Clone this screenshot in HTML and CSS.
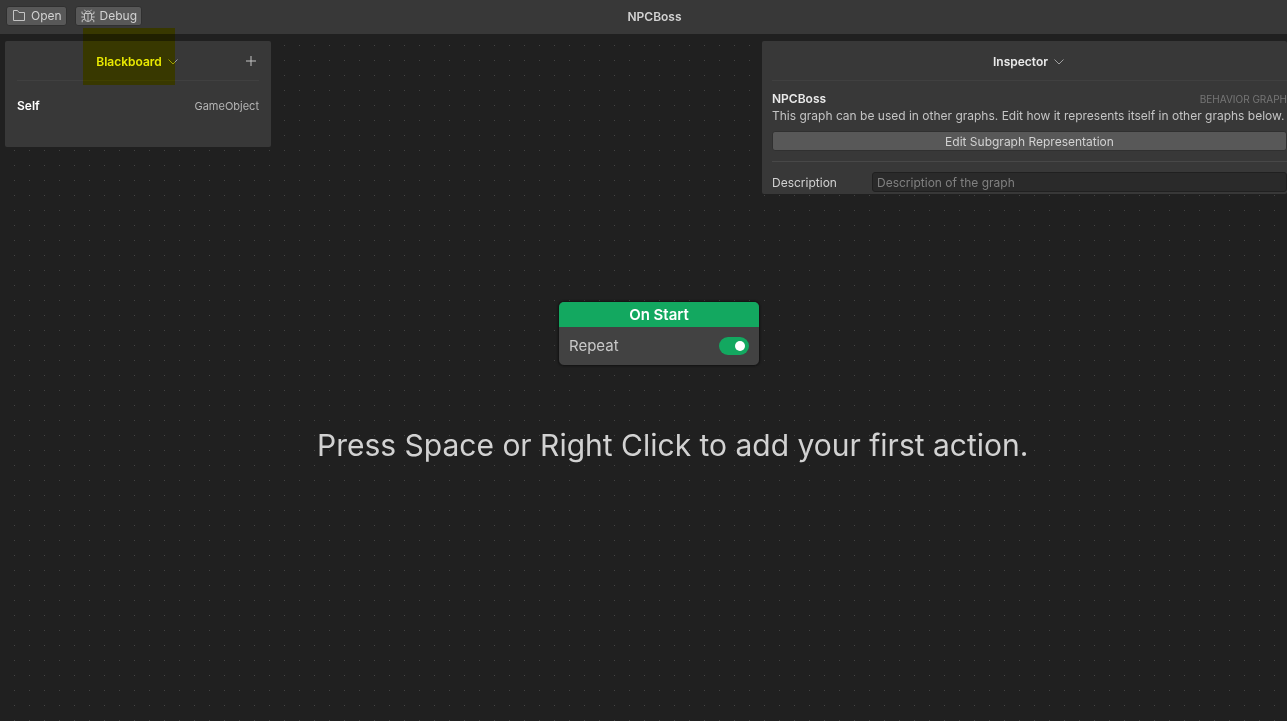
FILE: index.html
```html
<!DOCTYPE html>
<html lang="en">
<head>
<meta charset="utf-8">
<meta name="viewport" content="width=device-width, initial-scale=1">
<title>NPCBoss</title>
<link rel="stylesheet" href="styles.css">
</head>
<body>
<header class="toolbar">
  <div class="toolbar-actions">
    <button class="button tool" type="button">
      <svg class="icon" width="14" height="14" viewBox="0 0 14 14" aria-hidden="true"><path d="M1.500 11.500v-10h4l1.500 2h5.500v8z"/></svg>
      Open
    </button>
    <button class="button tool" type="button">
      <svg class="icon" width="14" height="14" viewBox="0 0 14 14" aria-hidden="true"><path d="M3.500 4.500h7v4.500q0 3.500-3.500 3.500t-3.500-3.500zM4.500 4.500q0-2.500 2.500-2.500t2.500 2.500M7 5v7M4.500 2.200L3.500.8M9.500 2.200l1-1.400M3.500 5.500L1 4.500V2.500M10.500 5.500L13 4.500V2.500M3.500 8H.3M10.500 8h3.200M3.800 10L1.200 11.200v2M10.200 10l2.600 1.200v2"/></svg>
      Debug
    </button>
  </div>
  <h1 class="title">NPCBoss</h1>
</header>
<main class="canvas">
  <section class="panel blackboard">
    <div class="panel-head">
      <h2 class="heading">Blackboard</h2>
      <svg class="chevron" width="10" height="6" viewBox="0 0 10 6" aria-hidden="true"><path d="M.5.5L5 5 9.500.5"/></svg>
      <button class="add" type="button" aria-label="Add variable">
        <svg class="plus" width="10" height="10" viewBox="0 0 10 10" aria-hidden="true"><path d="M5 0v10M0 5h10"/></svg>
      </button>
      <span class="highlight"></span>
    </div>
    <div class="variable">
      <strong class="variable-name">Self</strong>
      <span class="variable-type">GameObject</span>
    </div>
  </section>
  <section class="panel inspector">
    <div class="panel-head">
      <h2 class="heading">Inspector</h2>
      <svg class="chevron" width="10" height="6" viewBox="0 0 10 6" aria-hidden="true"><path d="M.5.5L5 5 9.500.5"/></svg>
    </div>
    <div class="graph-name">
      <h3 class="heading">NPCBoss</h3>
      <span class="graph-kind">BEHAVIOR GRAPH</span>
    </div>
    <p class="note">This graph can be used in other graphs. Edit how it represents itself in other graphs below.</p>
    <button class="button edit" type="button">Edit Subgraph Representation</button>
    <div class="field">
      <label class="field-label" for="description">Description</label>
      <input class="field-input" id="description" type="text" placeholder="Description of the graph">
    </div>
  </section>
  <article class="node">
    <h2 class="node-title">On Start</h2>
    <div class="node-row">
      <label for="repeat">Repeat</label>
      <input class="toggle" id="repeat" type="checkbox" role="switch" checked>
    </div>
  </article>
  <p class="hint">Press Space or Right Click to add your first action.</p>
</main>
</body>
</html>
```

FILE: styles.css
```css
* { box-sizing: border-box; }
body {
  margin: 0;
  min-height: 100vh;
  display: flex;
  flex-direction: column;
  overflow: hidden;
  background: #202020;
  color: #d2d2d2;
  font: 12px/16px Inter, "Liberation Sans", sans-serif;
}
h1, h2, h3, p { margin: 0; }
button, input { font: inherit; color: inherit; }
svg { fill: none; stroke: #c4c4c4; flex: none; }

.toolbar {
  display: grid;
  grid-template-columns: 1fr auto 1fr;
  align-items: center;
  height: 34px;
  padding: 0 6px;
  background: #383838;
}
.toolbar-actions {
  display: flex;
  gap: 8px;
  padding-bottom: 2px;
}
.title {
  padding-left: 22px;
  font-size: 12px;
  font-weight: 600;
}
.button {
  border: 1px solid #303030;
  border-radius: 3px;
  background: #585858;
  color: #d2d2d2;
}
.tool {
  display: flex;
  align-items: center;
  gap: 5px;
  height: 20px;
  padding: 0 4px 0 5px;
}

.canvas {
  position: relative;
  flex: 1;
  display: flex;
  justify-content: space-between;
  align-items: flex-start;
  padding: 7px 0 0 5px;
  background: conic-gradient(from 270deg at 1px 1px, #444 90deg, transparent 0) 14px 11px / 15px 15px;
}
.panel {
  background: #383838;
  border-radius: 2px;
}
.panel-head {
  position: relative;
  display: flex;
  justify-content: center;
  align-items: center;
  gap: 6px;
  height: 40px;
  padding: 2px 2px 0 0;
  border-bottom: 1px solid #404040;
}
.heading {
  color: #eaeaea;
  font-size: 12px;
  font-weight: 600;
}
.chevron { stroke: #a0a0a0; }
.blackboard {
  width: 266px;
  height: 106px;
  padding: 0 12px;
}
.add {
  position: absolute;
  right: 0;
  top: 12px;
  display: grid;
  place-items: center;
  width: 16px;
  height: 16px;
  padding: 0;
  border: 0;
  background: none;
}
.highlight {
  position: absolute;
  left: 66px;
  top: -13px;
  width: 92px;
  height: 57px;
  background: #ff0;
  mix-blend-mode: multiply;
}
.variable {
  display: flex;
  justify-content: space-between;
  padding-top: 17px;
}
.variable-name { color: #fff; font-weight: 600; }
.variable-type { color: #b4b4b4; font-size: 11px; }

.inspector {
  width: 525px;
  padding: 0 0 2px 10px;
}
.graph-name {
  display: flex;
  justify-content: space-between;
  padding-top: 10px;
}
.graph-kind { color: #767676; font-size: 10px; }
.note {
  padding: 1px 0 7px;
  color: #c4c4c4;
  white-space: nowrap;
}
.edit {
  display: block;
  width: 100%;
  height: 20px;
  padding: 1px 0 0;
}
.field {
  display: flex;
  align-items: center;
  margin-top: 10px;
  padding-top: 10px;
  border-top: 1px solid #484848;
}
.field-label { width: 100px; padding-top: 2px; }
.field-input {
  flex: 1;
  min-width: 0;
  height: 20px;
  padding: 0 4px;
  border: 1px solid #202020;
  border-radius: 3px;
  background: #2a2a2a;
}
.field-input::placeholder { color: #808080; opacity: 1; }

.node {
  position: absolute;
  left: 558px;
  top: 267px;
  width: 202px;
  overflow: hidden;
  border: 1px solid #151515;
  border-radius: 6px;
  background: #424242;
  box-shadow: 0 0 2px #101010;
}
.node-title {
  background: #13a860;
  color: #fff;
  font-size: 15px;
  font-weight: 600;
  line-height: 25px;
  text-align: center;
}
.node-row {
  display: flex;
  justify-content: space-between;
  align-items: center;
  height: 38px;
  padding: 0 10px;
  color: #c8c8c8;
  font-size: 15px;
}
.toggle {
  appearance: none;
  display: flex;
  justify-content: flex-end;
  align-items: center;
  width: 30px;
  height: 18px;
  margin: 0;
  padding: 0 4px;
  border-radius: 9px;
  background: #13a860;
}
.toggle::before {
  content: "";
  width: 10px;
  height: 10px;
  border-radius: 50%;
  background: #fff;
}
.hint {
  position: absolute;
  left: 317px;
  top: 391px;
  font-size: 30px;
  line-height: 40px;
  white-space: nowrap;
}
```
